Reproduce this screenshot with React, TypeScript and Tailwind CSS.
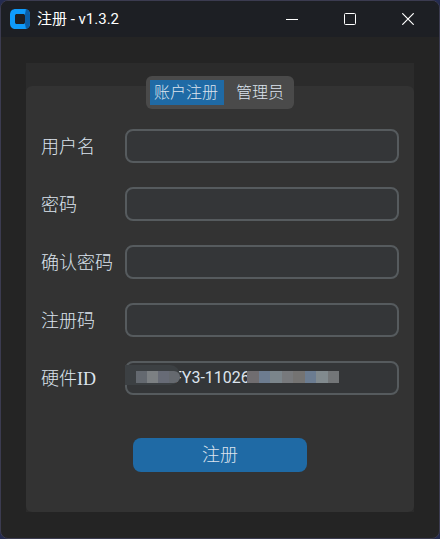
import { useState } from "react";

// ─── Title Bar ────────────────────────────────────────────────────────────────

function AppLogo() {
  return (
    <svg className="h-5 w-5 shrink-0" viewBox="0 0 20 20" aria-hidden="true">
      <path
        d="M6 0H14C18 0 20 2 20 6V14C20 18 18 20 14 20H6C2 20 0 18 0 14V6C0 2 2 0 6 0ZM7 5C5.600 5 5 5.600 5 7V13C5 14.400 5.600 15 7 15H13C14.400 15 15 14.400 15 13V7C15 5.600 14.400 5 13 5Z"
        fill="#0f9bfb"
        fillRule="evenodd"
      />
      <path
        d="M15 5L16 0.300C18.800 0.900 20 3 20 6V14C20 17 18.800 19.100 16 19.700L15 15Z"
        fill="#0a5ea8"
      />
    </svg>
  );
}

function TitleBar({ title }: { title: string }) {
  return (
    <header className="flex h-9 items-center bg-[#1d1f24] pl-[9px] font-[Roboto,'Noto_Sans_CJK_SC',sans-serif]">
      <AppLogo />
      <h1 className="ml-[7px] flex-1 text-[15px] text-white">{title}</h1>
      <div className="flex self-stretch pr-0.5 text-white">
        <button aria-label="最小化" className="flex w-[58px] items-center justify-center">
          <svg className="h-3 w-3" viewBox="0 0 12 12" stroke="currentColor">
            <path d="M0 6.500H12" />
          </svg>
        </button>
        <button aria-label="最大化" className="flex w-[58px] items-center justify-center">
          <svg className="h-3 w-3" viewBox="0 0 12 12" fill="none" stroke="currentColor">
            <rect x="0.500" y="0.500" width="11" height="11" rx="1" />
          </svg>
        </button>
        <button aria-label="关闭" className="flex w-[58px] items-center justify-center">
          <svg className="h-3 w-3" viewBox="0 0 12 12" stroke="currentColor" strokeWidth="1.200">
            <path d="M0.300 0.300L11.700 11.700M11.700 0.300L0.300 11.700" />
          </svg>
        </button>
      </div>
    </header>
  );
}

// ─── Tabs ─────────────────────────────────────────────────────────────────────

const tabs = ["账户注册", "管理员"];

interface TabBarProps {
  active: string;
  onChange: (tab: string) => void;
}

function TabBar({ active, onChange }: TabBarProps) {
  return (
    <div role="tablist" className="flex rounded-md bg-[#4a4a4a] p-1">
      {tabs.map((tab) => (
        <button
          key={tab}
          role="tab"
          aria-selected={tab === active}
          onClick={() => onChange(tab)}
          className={
            tab === active
              ? "h-[25px] bg-[#1f6aa5] pr-1.5 pl-1 text-base leading-none text-[#dce4ee]"
              : "h-[25px] pr-1.5 pl-3 text-base leading-none text-[#dce4ee]"
          }
        >
          {tab}
        </button>
      ))}
    </div>
  );
}

// ─── Form ─────────────────────────────────────────────────────────────────────

const fields = [
  { id: "username", label: "用户名", type: "text" },
  { id: "password", label: "密码", type: "password" },
  { id: "confirm", label: "确认密码", type: "password" },
  { id: "code", label: "注册码", type: "text" },
];

const inputClass =
  "h-[34px] w-full rounded-lg border-2 border-[#565b5e] bg-[#343638] text-base text-[#dce4ee] outline-none";

const labelClass = "w-[84px] shrink-0 pt-0.5 text-lg leading-none text-[#dce4ee]";

// Pixelated blocks that hide the private parts of the hardware id
const maskStart = ["bg-[#646970]", "bg-[#7c8083]", "bg-[#676b76]", "bg-[#65696f]"];
const maskEnd = [
  "bg-[#706d70]",
  "bg-[#6d7c90]",
  "bg-[#7b858b]",
  "bg-[#77797c]",
  "bg-[#747372]",
  "bg-[#6b7c91]",
  "bg-[#818a8e]",
  "bg-[#737678]",
];

function Mask({ colors, className }: { colors: string[]; className: string }) {
  return (
    <div aria-hidden="true" className={`pointer-events-none absolute flex h-3 ${className}`}>
      {colors.map((color, i) => (
        <span key={i} className={`flex-1 ${color}`} />
      ))}
    </div>
  );
}

function HardwareField() {
  return (
    <div className="flex items-center">
      <label htmlFor="hardware" className={labelClass}>
        硬件ID
      </label>
      <div className="relative flex-1">
        <input
          id="hardware"
          readOnly
          value="FY3-11026"
          className={`${inputClass} pb-0.5 pl-[46px] font-[Roboto,sans-serif] font-normal`}
        />
        <div className="pointer-events-none absolute top-1 left-0 h-5 w-[55px] rounded-r-full bg-[#3c4043]" />
        <Mask colors={maskStart} className="top-[10px] left-[11px] w-11 overflow-hidden rounded-r-md" />
        <Mask colors={maskEnd} className="top-[10px] left-[122px] w-[92px]" />
      </div>
    </div>
  );
}

function RegisterForm() {
  return (
    <form
      onSubmit={(e) => e.preventDefault()}
      className="flex flex-col gap-6 px-[15px] pt-5 pb-10"
    >
      {fields.map((field) => (
        <div key={field.id} className="flex items-center">
          <label htmlFor={field.id} className={labelClass}>
            {field.label}
          </label>
          <input id={field.id} type={field.type} className={`${inputClass} px-2`} />
        </div>
      ))}
      <HardwareField />
      <button
        type="submit"
        className="mt-[19px] h-[34px] w-[174px] self-center rounded-lg bg-[#1f6aa5] text-lg leading-none text-[#dce4ee]"
      >
        注册
      </button>
    </form>
  );
}

// ─── Window ───────────────────────────────────────────────────────────────────

export default function App() {
  const [active, setActive] = useState(tabs[0]);

  return (
    <div className="min-h-screen bg-[#242b50]">
      <div className="flex min-h-screen flex-col overflow-hidden rounded-lg border border-[#3b3b50] bg-[#242424]">
        <TitleBar title="注册 - v1.3.2" />
        <main className="mx-[25px] mt-[26px] mb-[26px] flex flex-1 flex-col bg-[#2b2b2b] pt-[23px] font-['Liberation_Serif','Noto_Sans_CJK_SC',serif] font-light">
          <section className="flex flex-1 flex-col rounded-md bg-[#333333]">
            <div className="-mt-[10px] flex justify-center">
              <TabBar active={active} onChange={setActive} />
            </div>
            <RegisterForm />
          </section>
        </main>
      </div>
    </div>
  );
}
